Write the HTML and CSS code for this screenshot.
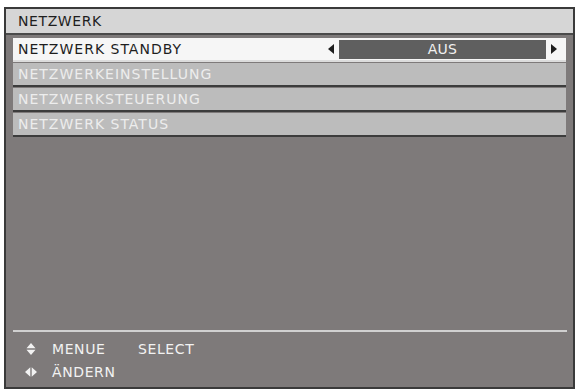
FILE: index.html
```html
<!doctype html>
<html lang="de">
    <head>
        <meta charset="UTF-8" />
        <title>NETZWERK</title>
        <link rel="stylesheet" href="styles.css">
    </head>
    <body>
        <div class="panel">
            <div class="title">NETZWERK</div>
            <div class="list">
                <div class="row active">
                    <span class="label">NETZWERK STANDBY</span>
                    <div class="value">
                        <span class="arrow left"></span>
                        <span class="box">AUS</span>
                        <span class="arrow right"></span>
                    </div>
                </div>
                <div class="row">NETZWERKEINSTELLUNG</div>
                <div class="row">NETZWERKSTEUERUNG</div>
                <div class="row">NETZWERK STATUS</div>
            </div>
            <div class="spacer"></div>
            <div class="footer">
                <div class="hint">
                    <svg class="icon" width="10" height="12" viewBox="0 0 10 12">
                        <path d="M5 0 L9.5 5.3 L0.5 5.3 Z M0.5 6.7 L9.5 6.7 L5 12 Z" fill="#f2f2f2" />
                    </svg>
                    <span class="key">MENUE</span>
                    <span>SELECT</span>
                </div>
                <div class="hint">
                    <svg class="icon" width="12" height="10" viewBox="0 0 12 10">
                        <path d="M0 5 L5.3 0.3 L5.3 9.7 Z M6.7 0.3 L12 5 L6.7 9.7 Z" fill="#f2f2f2" />
                    </svg>
                    <span class="key">ÄNDERN</span>
                </div>
            </div>
        </div>
    </body>
</html>
```
FILE: styles.css
```css
body {
    margin: 0;
    background-color: #ffffff;
    font-family: "DejaVu Sans", Verdana, sans-serif;
    font-size: 14px;
}
.panel {
    box-sizing: border-box;
    margin: 7px 0 0 4px;
    width: 571px;
    height: 382px;
    border: 2px solid #3a3a3a;
    background-color: #7e7a7a;
    display: flex;
    flex-direction: column;
}
.title {
    height: 24px;
    line-height: 24px;
    padding-left: 12px;
    background-color: #d6d6d6;
    color: #1e1e1e;
    border-bottom: 2px solid #4a4a4a;
    letter-spacing: 0.6px;
}
.list {
    display: flex;
    flex-direction: column;
    gap: 1px;
    padding: 3px 7px 0 7px;
}
.row {
    display: flex;
    align-items: center;
    height: 22px;
    padding-left: 5px;
    background-color: #bcbcbc;
    color: #ededed;
    border-bottom: 2px solid #3c3c3c;
    letter-spacing: 1px;
}
.row.active {
    background-color: #f6f6f6;
    color: #1e1e1e;
    border-bottom: 2px solid #dcdcdc;
}
.label {
    flex: 1;
}
.value {
    display: flex;
    align-items: center;
    gap: 5px;
    margin-right: 9px;
}
.box {
    width: 207px;
    height: 19px;
    line-height: 19px;
    text-align: center;
    background-color: #5f5f5f;
    color: #f0f0f0;
    letter-spacing: 0.3px;
}
.arrow {
    width: 0;
    height: 0;
    border-top: 5px solid transparent;
    border-bottom: 5px solid transparent;
}
.arrow.left {
    border-right: 6px solid #1e1e1e;
}
.arrow.right {
    border-left: 6px solid #1e1e1e;
}
.spacer {
    flex: 1;
}
.footer {
    margin: 0 6px 4px 7px;
    padding: 5px 0 0 12px;
    border-top: 2px solid #d0d0d0;
    color: #f2f2f2;
    letter-spacing: 0.6px;
}
.hint {
    display: flex;
    align-items: center;
    height: 23px;
}
.icon {
    width: 12px;
    margin-right: 15px;
}
.key {
    width: 86px;
}
```
